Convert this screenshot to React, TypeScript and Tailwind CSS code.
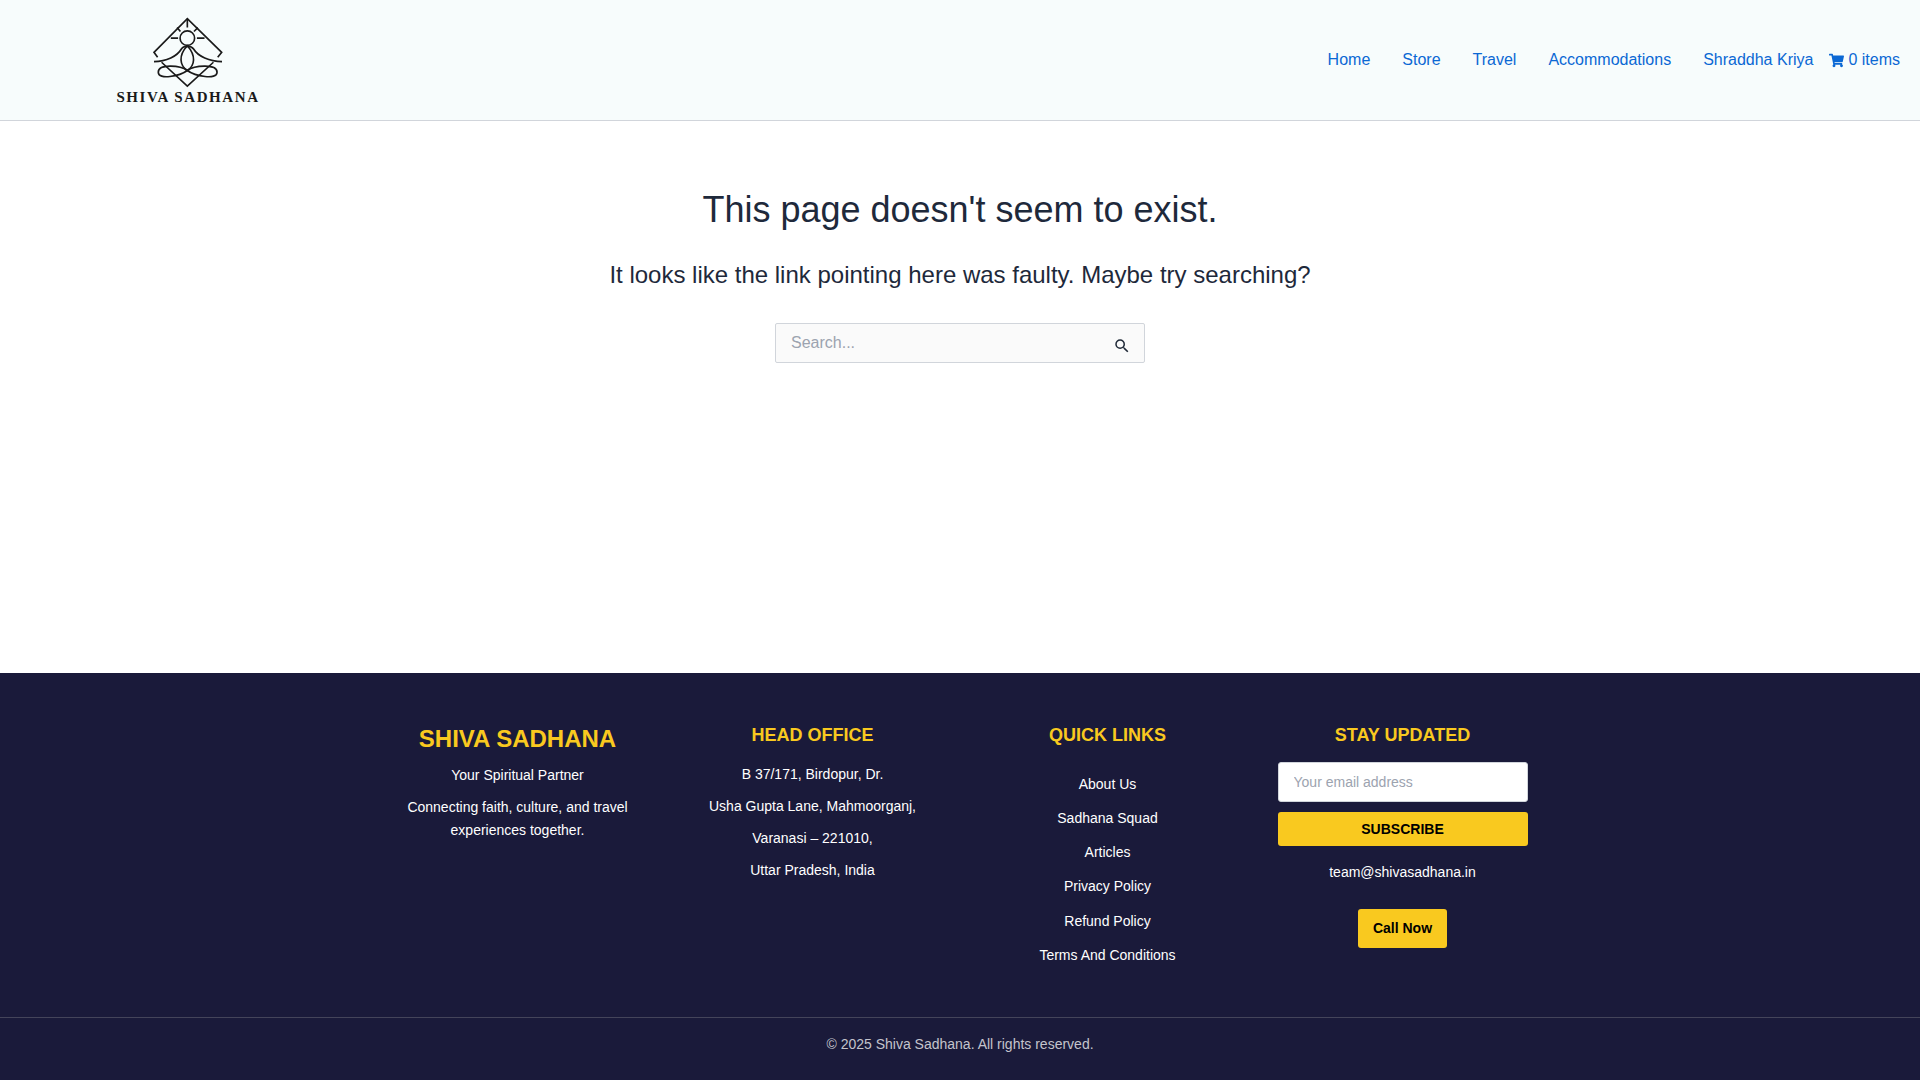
import { FaShoppingCart } from 'react-icons/fa';
import { MdSearch } from 'react-icons/md';

const navLinks = ['Home', 'Store', 'Travel', 'Accommodations', 'Shraddha Kriya'];
const officeLines = ['B 37/171, Birdopur, Dr.', 'Usha Gupta Lane, Mahmoorganj,', 'Varanasi – 221010,', 'Uttar Pradesh, India'];
const quickLinks = ['About Us', 'Sadhana Squad', 'Articles', 'Privacy Policy', 'Refund Policy', 'Terms And Conditions'];

function Logo() {
  return (
    <div className="flex w-[144px] flex-col items-center pt-[2px]">
      <svg viewBox="180 50 230 218" className="h-[72px] w-[76px]" fill="none" stroke="#1a1a1a" strokeWidth="5">
        <path d="M203 175L192 160L293 58L397 160L385 175" />
        <path d="M293 58V85M262 85L272 97M325 85L313 97M243 117H265M322 117H345" />
        <circle cx="293" cy="117" r="22" />
        <path d="M192 188C230 188 262 172 275 150C281 139 305 139 312 150C325 172 360 188 398 188" />
        <path d="M293 140C265 170 270 200 293 215C316 200 320 170 293 140Z" />
        <path d="M293 215C270 198 205 195 205 220C205 245 270 232 293 215Z" />
        <path d="M293 215C316 198 383 195 383 220C383 245 316 232 293 215Z" />
        <path d="M215 190L293 262L372 190" />
      </svg>
      <span className="font-['Liberation_Serif',serif] text-[15px] leading-[18px] font-bold tracking-[0.105em] whitespace-nowrap text-[#1a1a1a]">
        SHIVA SADHANA
      </span>
    </div>
  );
}

export default function App() {
  return (
    <div className="flex min-h-[1080px] flex-col bg-white font-['Liberation_Sans',Arial,sans-serif]">
      <header className="flex h-[121px] items-center justify-between border-b border-[#d1d5db] bg-[#f7fcfc] pr-5 pl-[116px]">
        <Logo />
        <nav className="flex items-center text-[16px] text-[#0b68d4]">
          {navLinks.map((link) => (
            <a key={link} href="#" className="px-4">{link}</a>
          ))}
          <a href="#" className="flex items-center gap-[4px]">
            <FaShoppingCart size={15} />
            0 items
          </a>
        </nav>
      </header>

      <main className="flex h-[552px] flex-col items-center pt-[68px] text-[#1e293b]">
        <h1 className="text-[36px] leading-[42px]">This page doesn't seem to exist.</h1>
        <p className="mt-[30px] text-[24px] leading-[28px]">It looks like the link pointing here was faulty. Maybe try searching?</p>
        <form className="relative mt-[34px] h-[40px] w-[370px]">
          <input
            placeholder="Search..."
            className="h-full w-full rounded-[2px] border border-[#d1d5db] bg-[#fafafa] pr-10 pb-[1px] pl-[15px] text-[16px] placeholder:text-[#9ca3af]"
          />
          <button type="button" className="absolute top-[14px] right-[14px] text-[#1f2937]">
            <MdSearch size={18} />
          </button>
        </form>
      </main>

      <footer className="flex-1 bg-[#1a1a3a] text-[14px] text-white">
        <div className="mx-auto grid h-[344px] w-[1135px] grid-cols-4 gap-[45px] pt-[51px] text-center">
          <div className="pt-[1px]">
            <h2 className="text-[24px] leading-[28px] font-bold text-[#f9c91f]">SHIVA SADHANA</h2>
            <p className="mt-[11px] leading-[23px]">Your Spiritual Partner</p>
            <p className="mt-[9px] leading-[23px]">Connecting faith, culture, and travel experiences together.</p>
          </div>
          <div>
            <h3 className="text-[18px] leading-[22px] font-bold text-[#f9c91f]">HEAD OFFICE</h3>
            <ul className="mt-[12px]">
              {officeLines.map((line) => (
                <li key={line} className="h-[32px] leading-[32px]">{line}</li>
              ))}
            </ul>
          </div>
          <div>
            <h3 className="text-[18px] leading-[22px] font-bold text-[#f9c91f]">QUICK LINKS</h3>
            <ul className="mt-[20.5px]">
              {quickLinks.map((link) => (
                <li key={link} className="h-[34.3px] leading-[34px]"><a href="#">{link}</a></li>
              ))}
            </ul>
          </div>
          <div className="flex flex-col items-center">
            <h3 className="text-[18px] leading-[22px] font-bold text-[#f9c91f]">STAY UPDATED</h3>
            <input
              placeholder="Your email address"
              className="mt-[16px] h-[40px] w-full rounded-[3px] border border-[#d1d5db] bg-white px-[15px] text-[14px] text-black placeholder:text-[#9ca3af]"
            />
            <button type="button" className="mt-[10px] h-[34px] w-full rounded-[3px] bg-[#f9c91f] text-[14px] font-bold text-black">SUBSCRIBE</button>
            <p className="mt-[16px] leading-[20px]">team@shivasadhana.in</p>
            <button type="button" className="mt-[27px] h-[39px] w-[89px] rounded-[3px] bg-[#f9c91f] text-[14px] font-bold text-black">Call Now</button>
          </div>
        </div>
        <div className="border-t border-[#44445a] pt-[16px] text-center text-[14px] leading-[20px] text-[#c4c4cc]">
          © 2025 Shiva Sadhana. All rights reserved.
        </div>
      </footer>
    </div>
  );
}
